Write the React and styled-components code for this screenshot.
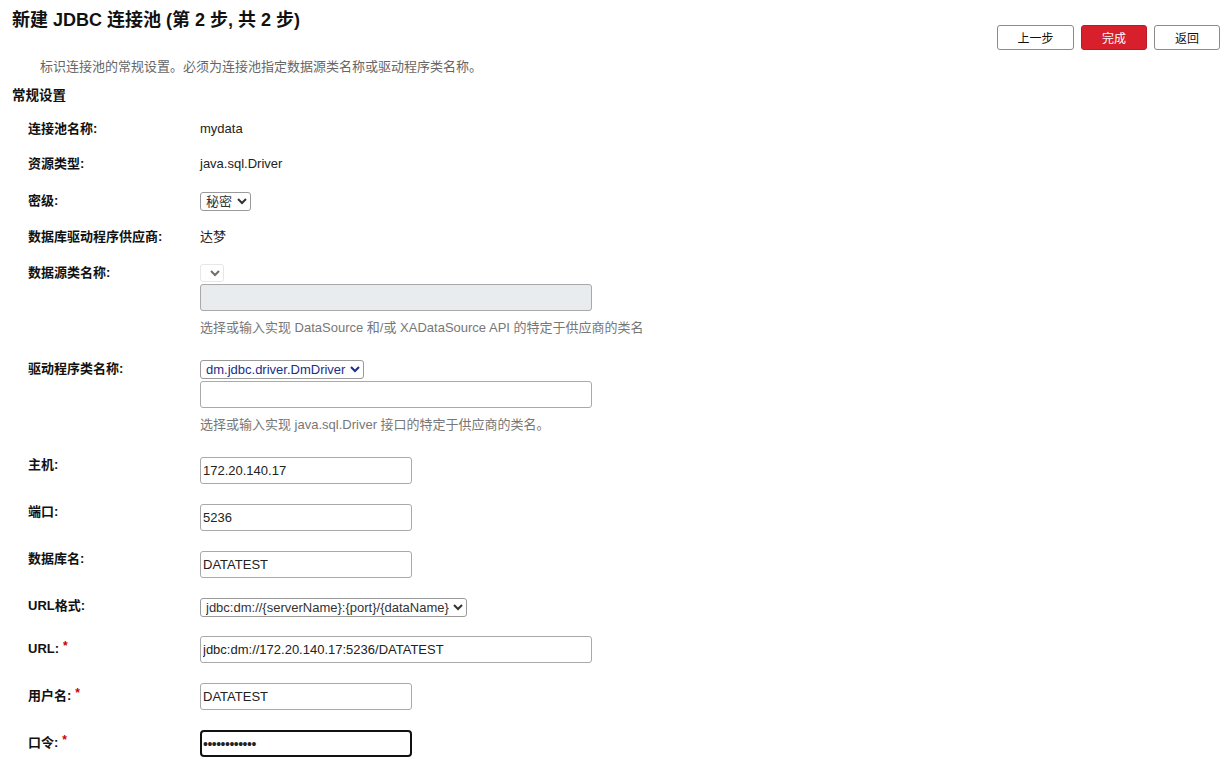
import React from 'react'
import styled, { createGlobalStyle } from 'styled-components'

const GlobalStyle = createGlobalStyle`
  body {
    margin: 0;
    background: #fff;
    font-family: "Liberation Sans", "Noto Sans CJK SC", sans-serif;
    color: #222;
  }
`

const Page = styled.div`
  width: 1225px;
  height: 762px;
  overflow: hidden;
  padding: 0 5px 0 12px;
  box-sizing: border-box;
`

const Header = styled.div`
  display: flex;
  justify-content: space-between;
  align-items: flex-start;
`

const Title = styled.h1`
  margin: 10px 0 0;
  font-size: 18px;
  font-weight: bold;
  line-height: 20px;
  color: #111;
`

const Buttons = styled.div`
  display: flex;
  gap: 7px;
  margin-top: 25px;
`

const Button = styled.button`
  width: ${({ w }) => w || 66}px;
  height: 25px;
  border-radius: 3px;
  font-family: inherit;
  font-size: 12px;
  cursor: pointer;
  border: 1px solid ${({ primary }) => (primary ? '#b81c25' : '#8a8a8a')};
  background: ${({ primary }) => (primary ? '#d7202b' : '#fff')};
  color: ${({ primary }) => (primary ? '#fff' : '#111')};
`

const Intro = styled.p`
  margin: 8px 0 0 28px;
  font-size: 13px;
  line-height: 18px;
  color: #666;
`

const Section = styled.h2`
  margin: 11px 0 0;
  font-size: 13.5px;
  font-weight: bold;
  line-height: 18px;
  color: #111;
`

const Form = styled.div`
  margin-top: 16px;
  padding-left: 16px;
`

const Row = styled.div`
  display: grid;
  grid-template-columns: 172px 1fr;
  align-items: start;
  justify-items: start;
  height: ${({ h }) => h}px;
`

const Label = styled.div`
  font-size: 13px;
  font-weight: bold;
  line-height: 16px;
  padding-top: ${({ pt }) => pt || 0}px;
  color: #111;
  white-space: nowrap;
`

const Star = styled.sup`
  color: #c00;
  font-size: 12px;
  margin-left: 4px;
  vertical-align: 3px;
  line-height: 0;
`

const Value = styled.div`
  font-size: 13px;
  line-height: 16px;
  color: #222;
`

const Field = styled.div`
  display: flex;
  flex-direction: column;
  align-items: flex-start;
  gap: 2px;
`

const Select = styled.select`
  height: ${({ hgt }) => hgt || 19}px;
  width: ${({ w }) => (w ? `${w}px` : 'auto')};
  font-family: inherit;
  font-size: 13px;
  padding: 0 1px;
  border: 1px solid ${({ disabled }) => (disabled ? '#ddd' : '#9a9a9a')};
  border-radius: 3px;
  background: #fff;
  color: ${({ tone }) => tone || '#333'};
`

const Input = styled.input`
  box-sizing: border-box;
  width: ${({ w }) => w}px;
  height: 27px;
  padding: 0 2px;
  font-family: inherit;
  font-size: 13px;
  color: #222;
  border: 1px solid #a9a9a9;
  border-radius: 3px;
  background: ${({ disabled }) => (disabled ? '#e9ecef' : '#fff')};
  outline: none;
`

const Secret = styled(Input)`
  border: 2px solid #111;
  border-radius: 4px;
  padding: 0 1px;
  font-size: 14px;
  letter-spacing: -0.5px;
`

const Help = styled.div`
  margin-top: 6px;
  font-size: 13px;
  line-height: 18px;
  color: #777;
`

export default function App() {
  return (
    <Page>
      <GlobalStyle />
      <Header>
        <Title>新建 JDBC 连接池 (第 2 步, 共 2 步)</Title>
        <Buttons>
          <Button w={77}>上一步</Button>
          <Button primary>完成</Button>
          <Button>返回</Button>
        </Buttons>
      </Header>
      <Intro>标识连接池的常规设置。必须为连接池指定数据源类名称或驱动程序类名称。</Intro>
      <Section>常规设置</Section>
      <Form>
        <Row h={35}>
          <Label>连接池名称:</Label>
          <Value>mydata</Value>
        </Row>
        <Row h={36}>
          <Label>资源类型:</Label>
          <Value>java.sql.Driver</Value>
        </Row>
        <Row h={37}>
          <Label pt={1}>密级:</Label>
          <Select defaultValue="秘密">
            <option>秘密</option>
            <option>机密</option>
            <option>绝密</option>
          </Select>
        </Row>
        <Row h={35}>
          <Label>数据库驱动程序供应商:</Label>
          <Value>达梦</Value>
        </Row>
        <Row h={96}>
          <Label pt={1}>数据源类名称:</Label>
          <Field>
            <Select disabled w={24} hgt={18} />
            <Input disabled w={392} />
            <Help>选择或输入实现 DataSource 和/或 XADataSource API 的特定于供应商的类名</Help>
          </Field>
        </Row>
        <Row h={97}>
          <Label pt={1}>驱动程序类名称:</Label>
          <Field>
            <Select tone="#1a2e8c" defaultValue="dm.jdbc.driver.DmDriver">
              <option>dm.jdbc.driver.DmDriver</option>
            </Select>
            <Input w={392} />
            <Help>选择或输入实现 java.sql.Driver 接口的特定于供应商的类名。</Help>
          </Field>
        </Row>
        <Row h={47}>
          <Label>主机:</Label>
          <Input w={212} defaultValue="172.20.140.17" />
        </Row>
        <Row h={47}>
          <Label>端口:</Label>
          <Input w={212} defaultValue="5236" />
        </Row>
        <Row h={47}>
          <Label>数据库名:</Label>
          <Input w={212} defaultValue="DATATEST" />
        </Row>
        <Row h={38}>
          <Label>URL格式:</Label>
          <Select defaultValue="a">
            <option value="a">{'jdbc:dm://{serverName}:{port}/{dataName}'}</option>
          </Select>
        </Row>
        <Row h={47}>
          <Label pt={5}>
            URL:<Star>*</Star>
          </Label>
          <Input w={392} defaultValue="jdbc:dm://172.20.140.17:5236/DATATEST" />
        </Row>
        <Row h={47}>
          <Label pt={5}>
            用户名:<Star>*</Star>
          </Label>
          <Input w={212} defaultValue="DATATEST" />
        </Row>
        <Row h={32}>
          <Label pt={5}>
            口令:<Star>*</Star>
          </Label>
          <Secret w={212} type="password" defaultValue="dmpassword12" />
        </Row>
      </Form>
    </Page>
  )
}
